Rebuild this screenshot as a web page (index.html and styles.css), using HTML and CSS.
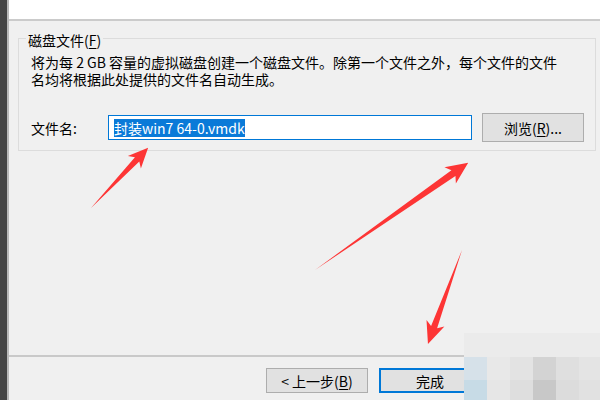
FILE: index.html
```html
<!DOCTYPE html>
<html lang="zh-CN">
<head>
<meta charset="utf-8">
<title>磁盘文件</title>
<link rel="stylesheet" href="styles.css">
</head>
<body>
<div class="screen">
  <div class="edge"></div>
  <div class="window">
    <div class="header"></div>
    <div class="content">
      <fieldset class="group">
        <legend class="group-title">磁盘文件(<u>F</u>)</legend>
        <p class="desc"><span class="line">将为每 2 GB 容量的虚拟磁盘创建一个磁盘文件。除第一个文件之外，每个文件的文件</span><span class="line">名均将根据此处提供的文件名自动生成。</span></p>
        <div class="file-row">
          <span class="file-label">文件名:</span>
          <div class="input"><span class="sel">封装win7 64-0.vmdk</span></div>
          <div class="btn browse">浏览(<u>R</u>)...</div>
        </div>
      </fieldset>
    </div>
    <div class="footer">
      <div class="btn back">&lt; 上一步(<u>B</u>)</div>
      <div class="btn finish">完成</div>
    </div>
  </div>

  <div class="mosaic">
    <i class="m1"></i><i class="m1"></i><i class="m1"></i><i class="m1"></i><i class="m1"></i><i class="m1"></i>
    <i class="m2a"></i><i class="m2b"></i><i class="m2c"></i><i class="m2d"></i><i class="m2e"></i><i class="m2f"></i>
    <i class="m3a"></i><i class="m3b"></i><i class="m3c"></i><i class="m3d"></i><i class="m3e"></i><i class="m3f"></i>
  </div>

  <svg class="arrows" width="600" height="400" viewBox="0 0 600 400">
    <polygon transform="translate(91 208) rotate(-46.5)" points="0,0 67,-3 63,-9 83,0 63,9 67,3"/>
    <polygon transform="translate(315 270) rotate(-35)" points="0,0 169,-3.5 165,-10 187,0 165,10 169,3.5"/>
    <polygon transform="translate(462 250) rotate(109.9)" points="0,0 82,-3.2 78,-9.5 100,0 78,9.5 82,3.2"/>
  </svg>
</div>
</body>
</html>
```

FILE: styles.css
```css
* { box-sizing: border-box; }

html, body {
  margin: 0;
  padding: 0;
}

body {
  width: 600px;
  height: 400px;
  overflow: hidden;
  background: #f0f0f0;
  font-family: "Noto Sans CJK SC", sans-serif;
  font-size: 14px;
  color: #000;
}

.screen {
  position: relative;
  width: 600px;
  height: 400px;
  display: flex;
}

.edge {
  width: 7px;
  background: #454545;
  flex: none;
}

.window {
  flex: 1;
  display: flex;
  flex-direction: column;
  border-left: 2px solid #b9b9b9;
  background: #f0f0f0;
}

.header {
  height: 21px;
  background: #fff;
  border-bottom: 2px solid #cbcbcb;
  flex: none;
}

.content {
  flex: 1;
  padding: 7px 4px 0 9px;
}

.group {
  margin: 0;
  padding: 5px 10px 8px 12px;
  border: 1px solid #dcdcdc;
  min-width: 0;
}

.group-title {
  margin-left: -5px;
  padding: 4px 2px 0;
  line-height: 17px;
}

.desc {
  margin: 0;
  line-height: 17px;
  white-space: nowrap;
}

.desc .line {
  display: block;
}

.file-row {
  display: flex;
  align-items: center;
  margin-top: 25px;
  height: 29px;
}

.file-label {
  width: 77px;
  flex: none;
}

.input {
  width: 364px;
  height: 25px;
  border: 1px solid #0078d7;
  background: #fff;
  padding: 0 5px;
  display: flex;
  align-items: center;
  flex: none;
}

.sel {
  background: #0a7ad8;
  color: #fff;
  line-height: 18px;
  white-space: nowrap;
}

.btn {
  display: flex;
  align-items: center;
  justify-content: center;
  width: 102px;
  background: #e1e1e1;
  border: 1px solid #adadad;
  white-space: nowrap;
  flex: none;
}

.browse {
  height: 29px;
  margin-left: 10px;
}

.footer {
  flex: none;
  height: 45px;
  border-top: 2px solid #c9c9c9;
  display: flex;
  justify-content: flex-end;
  align-items: flex-start;
  gap: 11px;
  padding: 11px 119px 0 0;
}

.back {
  height: 25px;
}

.finish {
  height: 25px;
  border: 2px solid #0078d7;
}

u {
  text-decoration: underline;
  text-underline-offset: 2px;
}

.mosaic {
  position: absolute;
  left: 464px;
  top: 333px;
  width: 136px;
  height: 67px;
  display: grid;
  grid-template-columns: 23px 23px 23px 23px 23px 21px;
  grid-template-rows: 24px 23px 20px;
}

.mosaic i { display: block; }
.m1 { background: #ebebeb; }
.m2a { background: #d6e1e9; }
.m2b { background: #e8e8e8; }
.m2c { background: #e3e3e3; }
.m2d { background: #d3d3d3; }
.m2e { background: #dfdfdf; }
.m2f { background: #e4e4e4; }
.m3a { background: #c7dbe6; }
.m3b { background: #e6e6e6; }
.m3c { background: #dedede; }
.m3d { background: #c8c8c8; }
.m3e { background: #dcdcdc; }
.m3f { background: #e1e1e1; }

.arrows {
  position: absolute;
  left: 0;
  top: 0;
  pointer-events: none;
}

.arrows polygon {
  fill: #fd3535;
}
```
